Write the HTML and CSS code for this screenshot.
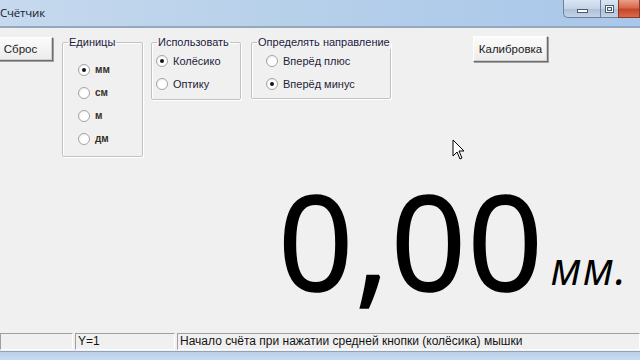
FILE: index.html
```html
<!DOCTYPE html>
<html lang="ru">
<head>
<meta charset="utf-8">
<title>Счётчик</title>
<link rel="stylesheet" href="styles.css">
</head>
<body>
<div class="window">
  <div class="titlebar">
    <span class="title">Счётчик</span>
    <div class="controls">
      <span class="wbtn min"><i></i></span>
      <span class="wbtn max"><i></i></span>
      <span class="wbtn close"></span>
    </div>
  </div>
  <div class="client">
    <div class="toprow">
      <button class="btn reset">Сброс</button>
      <fieldset class="group units">
        <legend>Единицы</legend>
        <div class="opts">
          <label class="radio on"><span class="dot"></span>мм</label>
          <label class="radio"><span class="dot"></span>см</label>
          <label class="radio"><span class="dot"></span>м</label>
          <label class="radio"><span class="dot"></span>дм</label>
        </div>
      </fieldset>
      <fieldset class="group use">
        <legend>Использовать</legend>
        <div class="opts">
          <label class="radio on"><span class="dot"></span>Колёсико</label>
          <label class="radio"><span class="dot"></span>Оптику</label>
        </div>
      </fieldset>
      <fieldset class="group dir">
        <legend>Определять направление</legend>
        <div class="opts">
          <label class="radio"><span class="dot"></span>Вперёд плюс</label>
          <label class="radio on"><span class="dot"></span>Вперёд минус</label>
        </div>
      </fieldset>
      <button class="btn calib">Калибровка</button>
    </div>
    <div class="readout">
      <span class="value">0,00</span><span class="unit">мм.</span>
    </div>
    <div class="statusbar">
      <span class="panel p1"></span>
      <span class="panel p2">Y=1</span>
      <span class="panel p3">Начало счёта при нажатии средней кнопки (колёсика) мышки</span>
    </div>
  </div>
  <div class="bottomframe"></div>
  <svg class="cursor" width="14" height="22" viewBox="0 0 14 22">
    <path d="M1 1 L1 17 L5 13 L8 20 L10 19 L7 12 L12 12 Z" fill="#fff" stroke="#000" stroke-width="1" stroke-linejoin="miter"/>
  </svg>
</div>
</body>
</html>
```

FILE: styles.css
```css
* { box-sizing: border-box; }
html, body { margin: 0; padding: 0; }
body {
  width: 640px;
  height: 360px;
  overflow: hidden;
  background: #f0f0f0;
  font-family: "Liberation Sans", Arial, sans-serif;
}
.window {
  position: relative;
  width: 640px;
  height: 360px;
  display: flex;
  flex-direction: column;
}
.titlebar {
  height: 28px;
  flex: none;
  display: flex;
  align-items: flex-start;
  background: linear-gradient(to right, #c6d9ee 0%, #b7d0ea 45%, #a9c7ea 100%);
  border-bottom: 2px solid #94a8be;
}
.title {
  font-family: "Open Sans", "Noto Sans", sans-serif;
  font-size: 11.5px;
  color: #14202e;
  margin-left: 0;
  margin-top: 5px;
  letter-spacing: -0.2px;
}
.controls {
  margin-left: auto;
  display: flex;
  height: 18px;
}
.wbtn {
  display: flex;
  align-items: center;
  justify-content: center;
  height: 18px;
  border: 1px solid #6f8196;
  border-top: none;
  background: linear-gradient(#dbe6f3 0%, #c4d4e8 50%, #aebfd6 51%, #c2d3e8 100%);
}
.wbtn.min {
  width: 37px;
  border-bottom-left-radius: 5px;
  border-right: none;
}
.wbtn.min i {
  width: 11px;
  height: 4px;
  margin-top: 5px;
  background: #fff;
  border: 1px solid #4b5a6c;
}
.wbtn.max {
  width: 18px;
  border-right: none;
}
.wbtn.max i {
  width: 9px;
  height: 8px;
  border: 1px solid #4b5a6c;
  box-shadow: inset 0 0 0 1px #fff, inset 0 0 0 2px #4b5a6c;
  background: #dfe7f2;
}
.wbtn.close {
  width: 22px;
  background: linear-gradient(#e8a08a 0%, #d8694c 45%, #c8452a 55%, #d86a4a 100%);
  border-color: #8a3a2a;
}
.client {
  flex: 1;
  display: flex;
  flex-direction: column;
  background: #f0f0f0;
}
.toprow {
  display: flex;
  align-items: flex-start;
  padding-top: 9px;
  height: 130px;
  flex: none;
}
.btn {
  font-family: "Liberation Sans", Arial, sans-serif;
  font-size: 11.5px;
  color: #1a1a1a;
  background: linear-gradient(#fbfbfb, #ececec);
  border: 1px solid #fff;
  border-right-color: #6d6d6d;
  border-bottom-color: #6d6d6d;
  box-shadow: 1px 1px 0 #a0a0a0, inset -1px -1px 0 #d0d0d0;
  padding: 0;
  text-align: center;
}
.reset {
  margin-left: -2px;
  width: 55px;
  height: 24px;
  padding-right: 10px;
}
.group {
  margin: 0;
  padding: 0;
  min-width: 0;
  border: 1px solid #c2c2c2;
  border-radius: 2px;
  box-shadow: 1px 1px 0 #fff, inset 1px 1px 0 #fff;
}
.group legend {
  font-size: 11px;
  color: #1c2040;
  padding: 0 1px;
  margin-left: 5px;
  line-height: 13px;
  white-space: nowrap;
}
.opts {
  display: flex;
  flex-direction: column;
  gap: 10px;
}
.units {
  margin-left: 9px;
  margin-top: -1px;
  width: 81px;
  height: 121px;
}
.units .opts { padding: 14px 0 0 15px; }
.use {
  margin-left: 8px;
  margin-top: -1px;
  width: 90px;
  height: 64px;
}
.use .opts { padding: 5px 0 0 4px; }
.dir {
  margin-left: 10px;
  margin-top: -1px;
  width: 140px;
  height: 63px;
}
.dir .opts { padding: 5px 0 0 14px; }
.radio {
  display: flex;
  align-items: center;
  height: 13px;
  font-size: 11px;
  color: #1e1e3a;
  white-space: nowrap;
}
.units .radio {
  font-size: 10px;
  font-weight: bold;
  color: #34301e;
}
.dot {
  width: 12px;
  height: 12px;
  border-radius: 50%;
  border: 1px solid #a4a4a4;
  background: radial-gradient(circle at 65% 65%, #ffffff 45%, #e8e8e8 100%);
  margin-right: 5px;
  display: flex;
  align-items: center;
  justify-content: center;
  flex: none;
}
.radio.on .dot::after {
  content: "";
  width: 4px;
  height: 4px;
  border-radius: 50%;
  background: #151515;
}
.calib {
  margin-left: auto;
  margin-right: 92px;
  margin-top: -1px;
  width: 75px;
  height: 26px;
}
.readout {
  flex: 1;
  display: flex;
  align-items: baseline;
  padding-left: 278px;
}
.value {
  font-family: "Open Sans", "Noto Sans", sans-serif;
  font-size: 132px;
  line-height: 164px;
  color: #000;
  letter-spacing: 1.5px;
  -webkit-text-stroke: 1.5px #000;
}
.unit {
  font-family: "Open Sans", "Noto Sans", sans-serif;
  font-style: italic;
  font-size: 45px;
  color: #000;
  margin-left: 6px;
  letter-spacing: 1px;
  position: relative;
  top: -6px;
}
.statusbar {
  height: 20px;
  flex: none;
  display: flex;
  gap: 2px;
  padding-top: 2px;
  padding-bottom: 1px;
}
.panel {
  height: 17px;
  border: 1px solid #a0a0a0;
  border-right-color: #fff;
  border-bottom-color: #fff;
  font-size: 12px;
  color: #141414;
  padding-left: 2px;
  line-height: 15px;
  white-space: nowrap;
}
.p1 { width: 73px; }
.p2 { width: 100px; }
.p3 { flex: 1; }
.bottomframe {
  height: 9px;
  flex: none;
  background: linear-gradient(#b9d0ea, #c9dbef);
  border-top: 1px solid #8ea4bd;
}
.cursor {
  position: absolute;
  left: 452px;
  top: 139px;
}
```
